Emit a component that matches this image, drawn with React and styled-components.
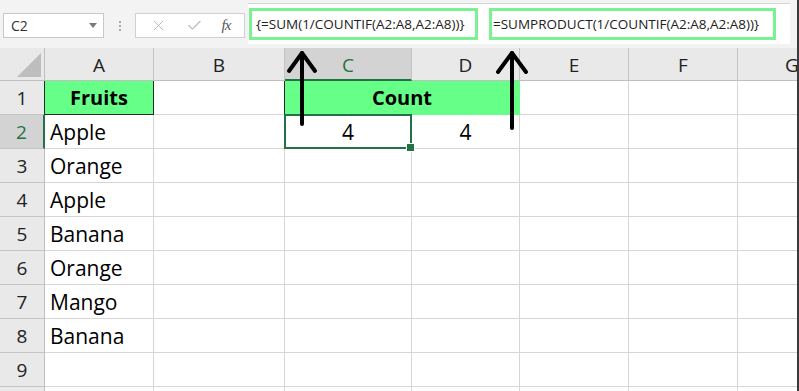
import React from 'react';
import styled, { createGlobalStyle } from 'styled-components';
import { X, Check } from 'lucide-react';

const GlobalStyle = createGlobalStyle`
  html, body {
    margin: 0;
    padding: 0;
    background: #ffffff;
    overflow: hidden;
  }
  * { box-sizing: border-box; }
`;

const Window = styled.div`
  position: relative;
  width: 799px;
  height: 391px;
  overflow: hidden;
  border-right: 2px solid #3a3a3a;
  font-family: "Open Sans", "Liberation Sans", sans-serif;
  background: #ffffff;
`;

const Toolbar = styled.div`
  display: flex;
  align-items: flex-start;
  height: 48px;
  padding-left: 3px;
  background: #f3f3f3;
`;

const NameBox = styled.div`
  display: flex;
  align-items: center;
  justify-content: space-between;
  margin-top: 13px;
  width: 101px;
  height: 25px;
  padding: 0 6px 0 7px;
  background: #ffffff;
  border: 1px solid #c8c8c8;
  font-size: 14px;
  color: #333;
`;

const Caret = styled.span`
  width: 0;
  height: 0;
  border-left: 4px solid transparent;
  border-right: 4px solid transparent;
  border-top: 5px solid #7a7a7a;
`;

const Dots = styled.div`
  display: flex;
  flex-direction: column;
  align-items: center;
  justify-content: center;
  gap: 2px;
  width: 31px;
  height: 25px;
  margin-top: 13px;

  span {
    width: 2px;
    height: 2px;
    background: #a8a8a8;
  }
`;

const ButtonBox = styled.div`
  display: flex;
  align-items: center;
  justify-content: space-around;
  margin-top: 13px;
  width: 110px;
  height: 25px;
  padding: 0 4px;
  background: #ffffff;
  border: 1px solid #d0d0d0;
  color: #b8b8b8;
`;

const Fx = styled.span`
  font-family: "Liberation Serif", serif;
  font-style: italic;
  font-size: 15px;
  color: #555;
  letter-spacing: -1px;
`;

const FormulaBar = styled.div`
  display: flex;
  align-items: flex-start;
  gap: 11px;
  flex: 1;
  height: 41px;
  margin: 3px 7px 0 3px;
  padding: 4px 0 0 1px;
  background: #ffffff;
  border-top: 1px solid #d6d6d6;
`;

const Formula = styled.div`
  display: flex;
  align-items: center;
  width: ${(p) => p.$w}px;
  height: 32px;
  padding-left: ${(p) => p.$pad}px;
  border: 3px solid #7cf094;
  font-size: 13.5px;
  color: #222;
  white-space: nowrap;
`;

const Sheet = styled.div`
  display: grid;
  grid-template-columns: 45px 109px 131px 127px 108px 109px 109px 109px;
  grid-template-rows: 33px repeat(10, 34px);
  width: 797px;
  overflow: hidden;
`;

const Corner = styled.div`
  position: relative;
  background: #e9e9e9;
  border-right: 1px solid #bfbfbf;
  border-bottom: 1px solid #bfbfbf;

  svg {
    position: absolute;
    left: 16px;
    top: 5px;
  }
`;

const ColHeader = styled.div`
  display: flex;
  align-items: center;
  justify-content: center;
  background: ${(p) => (p.$selected ? '#d3d3d3' : '#e9e9e9')};
  border-right: 1px solid #c4c4c4;
  border-bottom: ${(p) => (p.$selected ? '2px solid #217346' : '1px solid #bfbfbf')};
  font-size: 19px;
  color: ${(p) => (p.$selected ? '#217346' : '#222')};
  padding-top: 2px;
`;

const RowHeader = styled.div`
  display: flex;
  align-items: center;
  justify-content: center;
  background: ${(p) => (p.$selected ? '#d3d3d3' : '#e9e9e9')};
  border-bottom: 1px solid #c4c4c4;
  border-right: ${(p) => (p.$selected ? '2px solid #217346' : '1px solid #bfbfbf')};
  font-size: 19px;
  color: ${(p) => (p.$selected ? '#217346' : '#222')};
`;

const Cell = styled.div`
  position: relative;
  display: flex;
  align-items: center;
  justify-content: ${(p) => (p.$center ? 'center' : 'flex-start')};
  grid-column: ${(p) => (p.$span ? `span ${p.$span}` : 'auto')};
  padding-left: ${(p) => (p.$center ? 0 : 5)}px;
  background: ${(p) => (p.$fill ? '#66ff88' : '#ffffff')};
  border-right: 1px solid ${(p) => (p.$boxed ? '#2a2a2a' : p.$fill ? '#66ff88' : '#d6d6d6')};
  border-bottom: 1px solid ${(p) => (p.$boxed ? '#2a2a2a' : p.$fill ? '#66ff88' : '#d6d6d6')};
  border-left: ${(p) => (p.$edge ? '1px solid #2a2a2a' : 'none')};
  margin-left: ${(p) => (p.$edge ? '-1px' : 0)};
  font-size: ${(p) => (p.$bold ? 20 : 21)}px;
  font-weight: ${(p) => (p.$bold ? 700 : 400)};
  color: #000;
  white-space: nowrap;

  ${(p) =>
    p.$active &&
    `
    &::after {
      content: '';
      position: absolute;
      inset: -1px -1px -1px -1px;
      border: 2px solid #217346;
      pointer-events: none;
    }
    &::before {
      content: '';
      position: absolute;
      right: -4px;
      bottom: -4px;
      width: 7px;
      height: 7px;
      background: #217346;
      border: 1px solid #fff;
      z-index: 2;
    }
  `}
`;

const Arrows = styled.svg`
  position: absolute;
  left: 0;
  top: 0;
  pointer-events: none;
`;

const columns = ['A', 'B', 'C', 'D', 'E', 'F', 'G'];
const fruits = ['Apple', 'Orange', 'Apple', 'Banana', 'Orange', 'Mango', 'Banana'];

function Row({ n }) {
  if (n === 1) {
    return (
      <>
        <RowHeader>{n}</RowHeader>
        <Cell $fill $boxed $center $bold $edge>Fruits</Cell>
        <Cell />
        <Cell $fill $center $bold $span={2} $edge>Count</Cell>
        <Cell />
        <Cell />
        <Cell />
      </>
    );
  }
  const fruit = fruits[n - 2] || '';
  return (
    <>
      {/* the 10th row only peeks in at the bottom edge, so it shows no label */}
      <RowHeader $selected={n === 2}>{n < 10 ? n : ''}</RowHeader>
      <Cell>{fruit}</Cell>
      <Cell />
      <Cell $center $active={n === 2}>{n === 2 ? '4' : ''}</Cell>
      <Cell $center>{n === 2 ? '4' : ''}</Cell>
      <Cell />
      <Cell />
      <Cell />
    </>
  );
}

export default function App() {
  const rows = [];
  for (let i = 1; i <= 10; i++) rows.push(<Row key={i} n={i} />);

  return (
    <Window>
      <GlobalStyle />
      <Toolbar>
        <NameBox>
          C2
          <Caret />
        </NameBox>
        <Dots>
          <span />
          <span />
          <span />
        </Dots>
        <ButtonBox>
          <X size={17} strokeWidth={1.4} />
          <Check size={17} strokeWidth={1.6} />
          <Fx>fx</Fx>
        </ButtonBox>
        <FormulaBar>
          <Formula $w={229} $pad={4}>{'{=SUM(1/COUNTIF(A2:A8,A2:A8))}'}</Formula>
          <Formula $w={287} $pad={1}>{'=SUMPRODUCT(1/COUNTIF(A2:A8,A2:A8))}'}</Formula>
        </FormulaBar>
      </Toolbar>

      <Sheet>
        <Corner>
          <svg width="26" height="25" viewBox="0 0 26 25">
            <polygon points="1,24 25,24 25,0" fill="#bdbdbd" />
          </svg>
        </Corner>
        {columns.map((c) => (
          <ColHeader key={c} $selected={c === 'C'}>{c}</ColHeader>
        ))}
        {rows}
      </Sheet>

      <Arrows width="799" height="391">
        <g stroke="#000" strokeWidth="4" strokeLinecap="round" strokeLinejoin="round" fill="none">
          <line x1="302" y1="124" x2="302" y2="53" />
          <polyline points="289,71 302,53 315,71" />
          <line x1="512" y1="128" x2="512" y2="53" />
          <polyline points="498,72 512,53 526,72" />
        </g>
      </Arrows>
    </Window>
  );
}
